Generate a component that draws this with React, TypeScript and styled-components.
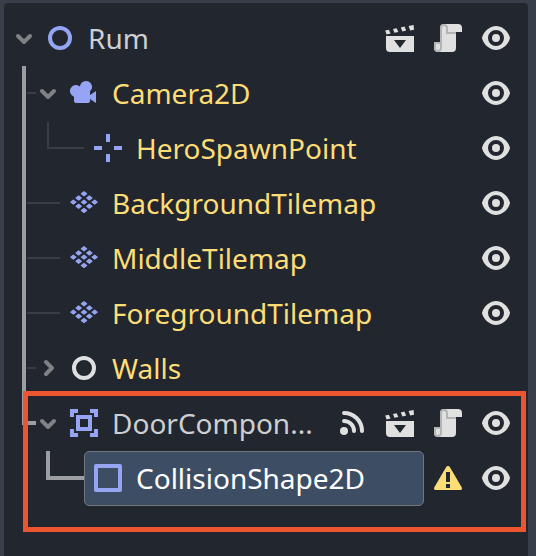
import React from "react";
import styled, { createGlobalStyle, css } from "styled-components";

const color = {
  frame: "#393e4b",
  panel: "#22272f",
  guide: "#393d44",
  guideActive: "#9c9ea1",
  text: "#cdcfd2",
  accent: "#fddd76",
  node2d: "#95a5f3",
  icon: "#e0e0e0",
  iconShade: "#b4b4b4",
  chevron: "#7f8184",
  selected: "#3d4e64",
  selectedBorder: "#70767e",
  highlight: "#ed5430",
};

const GlobalStyle = createGlobalStyle`
  * { box-sizing: border-box; }
  body {
    margin: 0;
    background: ${color.frame};
    font-family: "Noto Sans", "Open Sans", sans-serif;
  }
`;

const Dock = styled.main`
  display: flex;
  min-height: 100vh;
  padding: 3px 8px 0 4px;
  background: ${color.frame};
`;

const Panel = styled.section`
  position: relative;
  flex: 1;
  min-width: 0;
  padding: 8px 0 24px;
  border-radius: 4px 4px 0 0;
  background: ${color.panel};
`;

const Tree = styled.ul`
  margin: 0;
  padding: 0;
  list-style: none;
`;

const HighlightedGroup = styled.div`
  position: relative;

  &::after {
    content: "";
    position: absolute;
    inset: -5px 2px -26px 19px;
    border: 5px solid ${color.highlight};
    pointer-events: none;
  }
`;

const Row = styled.li`
  display: flex;
  padding-left: 8px;
`;

type GuideKind = "none" | "trunk" | "trunkTee" | "trunkEnd" | "elbow" | "elbowActive" | "line" | "lineActive";

const line = (c: string) => `linear-gradient(${c}, ${c})`;

const guideStyles: Record<GuideKind, ReturnType<typeof css> | null> = {
  none: null,
  trunk: css`
    background: ${line(color.guideActive)} 10px 0 / 4px 100% no-repeat;
  `,
  trunkTee: css`
    background:
      ${line(color.guideActive)} 10px 0 / 4px 100% no-repeat,
      ${line(color.guide)} 15px 26px / 9px 2px no-repeat;
  `,
  trunkEnd: css`
    background:
      ${line(color.guideActive)} 10px 0 / 4px 29px no-repeat,
      ${line(color.guideActive)} 10px 25px / 14px 4px no-repeat;
  `,
  elbow: css`
    background:
      ${line(color.guide)} 11px 1px / 2px 27px no-repeat,
      ${line(color.guide)} 11px 26px / 13px 2px no-repeat;
  `,
  elbowActive: css`
    background:
      ${line(color.guideActive)} 10px 0 / 4px 29px no-repeat,
      ${line(color.guideActive)} 10px 25px / 14px 4px no-repeat;
  `,
  line: css`
    background: ${line(color.guide)} 0 26px / 24px 2px no-repeat;
  `,
  lineActive: css`
    background: ${line(color.guideActive)} 0 25px / 24px 4px no-repeat;
  `,
};

const Guide = styled.span<{ $kind: GuideKind }>`
  flex: 0 0 24px;
  ${({ $kind }) => guideStyles[$kind]}
`;

const plainButton = css`
  margin: 0;
  border: 0;
  background: none;
  font: inherit;
  color: inherit;
  cursor: pointer;
`;

const Toggle = styled.button`
  ${plainButton}
  display: flex;
  flex: 0 0 24px;
  padding: 15px 0 16px;
`;

const NodeButton = styled.button<{ $selected?: boolean; $tone: "plain" | "accent" | "selected" }>`
  ${plainButton}
  display: flex;
  flex: 1;
  gap: 12px;
  min-width: 0;
  padding: 10px 7px 11px;
  border: 1px solid ${({ $tone }) => ($tone === "selected" ? color.selectedBorder : "transparent")};
  border-radius: 5px;
  background: ${({ $tone }) => ($tone === "selected" ? color.selected : "none")};
  color: ${({ $tone }) => ($tone === "selected" ? "#ffffff" : $tone === "accent" ? color.accent : color.text)};
  text-align: left;
`;

const Label = styled.span`
  font-size: 28px;
  line-height: 32px;
  white-space: nowrap;
`;

const Actions = styled.div`
  display: flex;
  flex: none;
  gap: 16px;
  padding: 11px 16px 12px 8px;
`;

const ActionButton = styled.button`
  ${plainButton}
  display: flex;
  padding: 0;
`;

const Icon = styled.svg<{ $size?: number }>`
  display: block;
  flex: none;
  width: ${({ $size = 32 }) => $size}px;
  height: ${({ $size = 32 }) => $size}px;
`;

const Chevron = ({ open }: { open: boolean }) => (
  <Icon $size={24} viewBox="0 0 12 12" aria-hidden="true">
    <path
      d={open ? "M3 5l3 3 3-3" : "M5 9l3-3-3-3"}
      fill="none"
      stroke={color.chevron}
      strokeWidth="2"
      strokeLinecap="round"
      strokeLinejoin="round"
    />
  </Icon>
);

type NodeKind = "node2d" | "node" | "camera" | "marker" | "tilemap" | "area" | "shape";

const tileCenters = [0, 1, 2].flatMap((i) =>
  [0, 1, 2].map((j) => [8 + ((i - j) * 8) / 3, 3.4 + ((i + j) * 25) / 12]),
);

const nodeShapes: Record<NodeKind, React.ReactNode> = {
  node2d: <circle cx="8" cy="8" r="5" fill="none" stroke={color.node2d} strokeWidth="2" />,
  node: <circle cx="8" cy="8" r="5" fill="none" stroke={color.icon} strokeWidth="2" />,
  camera: (
    <path
      fill={color.node2d}
      d="M9 2a3 3 0 0 0-3 2.777 3 3 0 1 0-3 5.047V12a1 1 0 0 0 1 1h6a1 1 0 0 0 1-1v-1l3 2V7l-3 2V7.23A3 3 0 0 0 9 2z"
    />
  ),
  marker: <path fill={color.node2d} d="M7 1v4h2V1zM7 11v4h2v-4zM1 7v2h4V7zM11 7v2h4V7z" />,
  tilemap: (
    <path
      fill={color.node2d}
      stroke={color.node2d}
      strokeWidth=".6"
      strokeLinejoin="round"
      d={tileCenters.map(([x, y]) => `M${x - 1.3} ${y}l1.3-1 1.3 1-1.3 1z`).join("")}
    />
  ),
  area: (
    <path
      fill={color.node2d}
      fillRule="evenodd"
      d="M1 1v4h2V3h2V1zM11 1v2h2v2h2V1zM1 11v4h4v-2H3v-2zM13 11v2h-2v2h4v-4zM4 4v8h8V4zM6 6h4v4H6z"
    />
  ),
  shape: (
    <rect x="2" y="2" width="12" height="12" fill="none" stroke={color.node2d} strokeWidth="2" strokeLinejoin="round" />
  ),
};

type ActionKind = "signal" | "scene" | "script" | "warning" | "visible";

const actionShapes: Record<ActionKind, React.ReactNode> = {
  signal: (
    <>
      <circle cx="4" cy="12" r="2" fill={color.icon} />
      <path
        d="M4 3a9 9 0 0 1 9 9M4 7a5 5 0 0 1 5 5"
        fill="none"
        stroke={color.icon}
        strokeWidth="2"
        strokeLinecap="round"
      />
    </>
  ),
  scene: (
    <path
      fill={color.icon}
      fillRule="evenodd"
      d="M.6 4.3l1.8-.4.9 1.9-2 .4zM4.5 3.5l1.8-.4.9 1.9-2 .4zM8.4 2.7l1.8-.4.9 2-1.9.4zM12.3 2l2.5-.5.2 2.4-1.9.4zM1 7v6a2 2 0 0 0 2 2h12V7zM5 9h6l-3 4z"
    />
  ),
  script: (
    <>
      <path
        fill={color.icon}
        d="M6 1a2 2 0 0 0-2 2v7H1v3a2 2 0 0 0 2 2h7a2 2 0 0 0 2-2V5h3V3a2 2 0 0 0-2-2z"
      />
      <path
        fill={color.iconShade}
        d="M6 1a2 2 0 0 0-2 2v7H1v3a2 2 0 0 0 4 0V3a1 1 0 0 1 2 0v3h5V5H8V3a2 2 0 0 0-2-2zM2 11h2v2a1 1 0 0 1-2 0z"
        fillRule="evenodd"
      />
    </>
  ),
  warning: (
    <path
      fill={color.accent}
      fillRule="evenodd"
      d="M8 2a1 1 0 0 0-.9.5l-6 10.2A.9.9 0 0 0 1.9 14h12.2a.9.9 0 0 0 .8-1.3l-6-10.2A1 1 0 0 0 8 2zM7 5h2v5H7zM7 11h2v2H7z"
    />
  ),
  visible: (
    <path
      fill={color.icon}
      d="M8 2C5.443 2 2.209 3.948 1.045 7.705a1 1 0 0 0-.006.57C2.163 12.05 5.499 14 8 14s5.836-1.95 6.961-5.725a1 1 0 0 0 0-.553C13.861 3.935 10.554 2 8 2zm0 2a4 4 0 0 1 4 4 4 4 0 0 1-4 4 4 4 0 0 1-4-4 4 4 0 0 1 4-4zm0 2a2 2 0 0 0-2 2 2 2 0 0 0 2 2 2 2 0 0 0 2-2 2 2 0 0 0-2-2z"
    />
  ),
};

const actionNames: Record<ActionKind, string> = {
  signal: "Signals",
  scene: "Open scene",
  script: "Open script",
  warning: "Configuration warning",
  visible: "Toggle visibility",
};

interface TreeNode {
  name: string;
  kind: NodeKind;
  level: number;
  tone: "plain" | "accent" | "selected";
  guides: GuideKind[];
  open?: boolean;
  actions: ActionKind[];
}

const nodes: TreeNode[] = [
  { name: "Rum", kind: "node2d", level: 1, tone: "plain", guides: [], open: true, actions: ["scene", "script", "visible"] },
  { name: "Camera2D", kind: "camera", level: 2, tone: "accent", guides: ["trunkTee"], open: true, actions: ["visible"] },
  { name: "HeroSpawnPoint", kind: "marker", level: 3, tone: "accent", guides: ["trunk", "elbow", "line"], actions: ["visible"] },
  { name: "BackgroundTilemap", kind: "tilemap", level: 2, tone: "accent", guides: ["trunkTee", "line"], actions: ["visible"] },
  { name: "MiddleTilemap", kind: "tilemap", level: 2, tone: "accent", guides: ["trunkTee", "line"], actions: ["visible"] },
  { name: "ForegroundTilemap", kind: "tilemap", level: 2, tone: "accent", guides: ["trunkTee", "line"], actions: ["visible"] },
  { name: "Walls", kind: "node", level: 2, tone: "accent", guides: ["trunkTee"], open: false, actions: [] },
];

const doorNodes: TreeNode[] = [
  { name: "DoorCompon...", kind: "area", level: 2, tone: "plain", guides: ["trunkEnd"], open: true, actions: ["signal", "scene", "script", "visible"] },
  { name: "CollisionShape2D", kind: "shape", level: 3, tone: "selected", guides: ["none", "elbowActive", "lineActive"], actions: ["warning", "visible"] },
];

const NodeRow = ({ node }: { node: TreeNode }) => (
  <Row role="treeitem" aria-level={node.level} aria-expanded={node.open} aria-selected={node.tone === "selected"}>
    {node.guides.map((kind, i) => (
      <Guide key={i} $kind={kind} />
    ))}
    {node.open !== undefined && (
      <Toggle type="button" aria-label={`${node.open ? "Collapse" : "Expand"} ${node.name}`}>
        <Chevron open={node.open} />
      </Toggle>
    )}
    <NodeButton type="button" $tone={node.tone}>
      <Icon viewBox="0 0 16 16" aria-hidden="true">
        {nodeShapes[node.kind]}
      </Icon>
      <Label>{node.name}</Label>
    </NodeButton>
    <Actions>
      {node.actions.map((kind) => (
        <ActionButton key={kind} type="button" aria-label={actionNames[kind]}>
          <Icon viewBox="0 0 16 16" aria-hidden="true">
            {actionShapes[kind]}
          </Icon>
        </ActionButton>
      ))}
    </Actions>
  </Row>
);

export default function App() {
  return (
    <>
      <GlobalStyle />
      <Dock>
        <Panel aria-label="Scene">
          <Tree role="tree">
            {nodes.map((node) => (
              <NodeRow key={node.name} node={node} />
            ))}
            <HighlightedGroup role="presentation">
              {doorNodes.map((node) => (
                <NodeRow key={node.name} node={node} />
              ))}
            </HighlightedGroup>
          </Tree>
        </Panel>
      </Dock>
    </>
  );
}
